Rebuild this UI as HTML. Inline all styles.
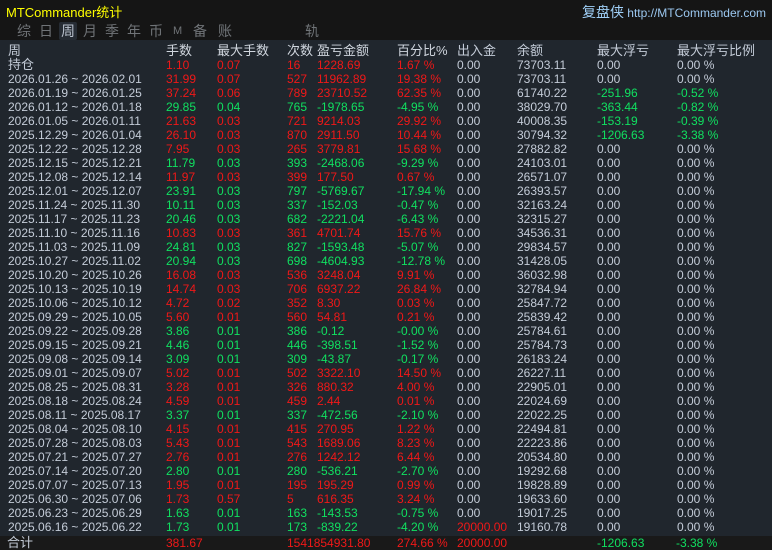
<!DOCTYPE html>
<html><head><meta charset="utf-8"><style>
*{margin:0;padding:0;box-sizing:border-box}
body{width:772px;height:550px;background:#151515;font-family:"Liberation Sans","Noto Sans CJK SC",sans-serif;font-size:12px;overflow:hidden;position:relative;color:#c4ccd8}
.title{position:absolute;left:6px;top:2px;color:#ffff00;font-size:13px}
.site{position:absolute;right:6px;top:2px;color:#9cc8f0;font-size:12px}
.site b{font-weight:normal;font-size:14px;color:#a0d0f8}
.tabs{position:absolute;top:22px;left:0;height:18px;}
.tabs span{position:absolute;top:0;color:#707478;font-size:14px;line-height:18px}
.tabs .on{background:#262c34;color:#b8c0cc;padding:0 2px;border-radius:2px}
.panel{position:absolute;left:0;top:40px;width:772px;height:496px;background:#20262d}
.row{position:absolute;left:0;height:14px;line-height:14px;white-space:nowrap;width:772px}
.row span{position:absolute;top:0}
.c0{left:8px}.c1{left:166px}.c2{left:217px}.c3{left:287px}.c4{left:317px}.c5{left:397px}.c6{left:457px}.c7{left:517px}.c8{left:597px}.c9{left:677px}
.hd{font-size:13px;color:#d0d6de}
.r span{color:#f01818}.g span{color:#10e060}
.row span.c0,.row span.c6,.row span.c7,.row span.c8,.row span.c9{color:#c4ccd8}
.row span.rr{color:#f01818}.row span.gg{color:#10e060}
.tot{position:absolute;left:0;top:536px;width:772px;height:14px;background:#191919}
.tot span{position:absolute;top:0;line-height:14px;color:#f01818}
</style></head><body>
<div class="title">MTCommander统计</div>
<div class="site"><b>复盘侠</b> http://MTCommander.com</div>
<div class="tabs">
<span style="left:17px">综</span><span style="left:39px">日</span><span class="on" style="left:59px">周</span><span style="left:83px">月</span><span style="left:105px">季</span><span style="left:127px">年</span><span style="left:149px">币</span><span style="left:173px;font-size:11px">M</span><span style="left:193px">备</span><span style="left:218px">账户</span><span style="left:305px">轨迹</span>
</div>
<div class="panel"></div>
<div class="row hd" style="top:44px"><span class="c0">周</span><span class="c1">手数</span><span class="c2">最大手数</span><span class="c3">次数</span><span class="c4">盈亏金额</span><span class="c5">百分比%</span><span class="c6">出入金</span><span class="c7">余额</span><span class="c8">最大浮亏</span><span class="c9">最大浮亏比例</span></div>
<div class="row r" style="top:58px"><span class="c0" style="font-size:13px">持仓</span><span class="c1">1.10</span><span class="c2">0.07</span><span class="c3">16</span><span class="c4">1228.69</span><span class="c5">1.67 %</span><span class="c6">0.00</span><span class="c7">73703.11</span><span class="c8">0.00</span><span class="c9">0.00 %</span></div>
<div class="row r" style="top:72px"><span class="c0">2026.01.26 ~ 2026.02.01</span><span class="c1">31.99</span><span class="c2">0.07</span><span class="c3">527</span><span class="c4">11962.89</span><span class="c5">19.38 %</span><span class="c6">0.00</span><span class="c7">73703.11</span><span class="c8">0.00</span><span class="c9">0.00 %</span></div>
<div class="row r" style="top:86px"><span class="c0">2026.01.19 ~ 2026.01.25</span><span class="c1">37.24</span><span class="c2">0.06</span><span class="c3">789</span><span class="c4">23710.52</span><span class="c5">62.35 %</span><span class="c6">0.00</span><span class="c7">61740.22</span><span class="c8 gg">-251.96</span><span class="c9 gg">-0.52 %</span></div>
<div class="row g" style="top:100px"><span class="c0">2026.01.12 ~ 2026.01.18</span><span class="c1">29.85</span><span class="c2">0.04</span><span class="c3">765</span><span class="c4">-1978.65</span><span class="c5">-4.95 %</span><span class="c6">0.00</span><span class="c7">38029.70</span><span class="c8 gg">-363.44</span><span class="c9 gg">-0.82 %</span></div>
<div class="row r" style="top:114px"><span class="c0">2026.01.05 ~ 2026.01.11</span><span class="c1">21.63</span><span class="c2">0.03</span><span class="c3">721</span><span class="c4">9214.03</span><span class="c5">29.92 %</span><span class="c6">0.00</span><span class="c7">40008.35</span><span class="c8 gg">-153.19</span><span class="c9 gg">-0.39 %</span></div>
<div class="row r" style="top:128px"><span class="c0">2025.12.29 ~ 2026.01.04</span><span class="c1">26.10</span><span class="c2">0.03</span><span class="c3">870</span><span class="c4">2911.50</span><span class="c5">10.44 %</span><span class="c6">0.00</span><span class="c7">30794.32</span><span class="c8 gg">-1206.63</span><span class="c9 gg">-3.38 %</span></div>
<div class="row r" style="top:142px"><span class="c0">2025.12.22 ~ 2025.12.28</span><span class="c1">7.95</span><span class="c2">0.03</span><span class="c3">265</span><span class="c4">3779.81</span><span class="c5">15.68 %</span><span class="c6">0.00</span><span class="c7">27882.82</span><span class="c8">0.00</span><span class="c9">0.00 %</span></div>
<div class="row g" style="top:156px"><span class="c0">2025.12.15 ~ 2025.12.21</span><span class="c1">11.79</span><span class="c2">0.03</span><span class="c3">393</span><span class="c4">-2468.06</span><span class="c5">-9.29 %</span><span class="c6">0.00</span><span class="c7">24103.01</span><span class="c8">0.00</span><span class="c9">0.00 %</span></div>
<div class="row r" style="top:170px"><span class="c0">2025.12.08 ~ 2025.12.14</span><span class="c1">11.97</span><span class="c2">0.03</span><span class="c3">399</span><span class="c4">177.50</span><span class="c5">0.67 %</span><span class="c6">0.00</span><span class="c7">26571.07</span><span class="c8">0.00</span><span class="c9">0.00 %</span></div>
<div class="row g" style="top:184px"><span class="c0">2025.12.01 ~ 2025.12.07</span><span class="c1">23.91</span><span class="c2">0.03</span><span class="c3">797</span><span class="c4">-5769.67</span><span class="c5">-17.94 %</span><span class="c6">0.00</span><span class="c7">26393.57</span><span class="c8">0.00</span><span class="c9">0.00 %</span></div>
<div class="row g" style="top:198px"><span class="c0">2025.11.24 ~ 2025.11.30</span><span class="c1">10.11</span><span class="c2">0.03</span><span class="c3">337</span><span class="c4">-152.03</span><span class="c5">-0.47 %</span><span class="c6">0.00</span><span class="c7">32163.24</span><span class="c8">0.00</span><span class="c9">0.00 %</span></div>
<div class="row g" style="top:212px"><span class="c0">2025.11.17 ~ 2025.11.23</span><span class="c1">20.46</span><span class="c2">0.03</span><span class="c3">682</span><span class="c4">-2221.04</span><span class="c5">-6.43 %</span><span class="c6">0.00</span><span class="c7">32315.27</span><span class="c8">0.00</span><span class="c9">0.00 %</span></div>
<div class="row r" style="top:226px"><span class="c0">2025.11.10 ~ 2025.11.16</span><span class="c1">10.83</span><span class="c2">0.03</span><span class="c3">361</span><span class="c4">4701.74</span><span class="c5">15.76 %</span><span class="c6">0.00</span><span class="c7">34536.31</span><span class="c8">0.00</span><span class="c9">0.00 %</span></div>
<div class="row g" style="top:240px"><span class="c0">2025.11.03 ~ 2025.11.09</span><span class="c1">24.81</span><span class="c2">0.03</span><span class="c3">827</span><span class="c4">-1593.48</span><span class="c5">-5.07 %</span><span class="c6">0.00</span><span class="c7">29834.57</span><span class="c8">0.00</span><span class="c9">0.00 %</span></div>
<div class="row g" style="top:254px"><span class="c0">2025.10.27 ~ 2025.11.02</span><span class="c1">20.94</span><span class="c2">0.03</span><span class="c3">698</span><span class="c4">-4604.93</span><span class="c5">-12.78 %</span><span class="c6">0.00</span><span class="c7">31428.05</span><span class="c8">0.00</span><span class="c9">0.00 %</span></div>
<div class="row r" style="top:268px"><span class="c0">2025.10.20 ~ 2025.10.26</span><span class="c1">16.08</span><span class="c2">0.03</span><span class="c3">536</span><span class="c4">3248.04</span><span class="c5">9.91 %</span><span class="c6">0.00</span><span class="c7">36032.98</span><span class="c8">0.00</span><span class="c9">0.00 %</span></div>
<div class="row r" style="top:282px"><span class="c0">2025.10.13 ~ 2025.10.19</span><span class="c1">14.74</span><span class="c2">0.03</span><span class="c3">706</span><span class="c4">6937.22</span><span class="c5">26.84 %</span><span class="c6">0.00</span><span class="c7">32784.94</span><span class="c8">0.00</span><span class="c9">0.00 %</span></div>
<div class="row r" style="top:296px"><span class="c0">2025.10.06 ~ 2025.10.12</span><span class="c1">4.72</span><span class="c2">0.02</span><span class="c3">352</span><span class="c4">8.30</span><span class="c5">0.03 %</span><span class="c6">0.00</span><span class="c7">25847.72</span><span class="c8">0.00</span><span class="c9">0.00 %</span></div>
<div class="row r" style="top:310px"><span class="c0">2025.09.29 ~ 2025.10.05</span><span class="c1">5.60</span><span class="c2">0.01</span><span class="c3">560</span><span class="c4">54.81</span><span class="c5">0.21 %</span><span class="c6">0.00</span><span class="c7">25839.42</span><span class="c8">0.00</span><span class="c9">0.00 %</span></div>
<div class="row g" style="top:324px"><span class="c0">2025.09.22 ~ 2025.09.28</span><span class="c1">3.86</span><span class="c2">0.01</span><span class="c3">386</span><span class="c4">-0.12</span><span class="c5">-0.00 %</span><span class="c6">0.00</span><span class="c7">25784.61</span><span class="c8">0.00</span><span class="c9">0.00 %</span></div>
<div class="row g" style="top:338px"><span class="c0">2025.09.15 ~ 2025.09.21</span><span class="c1">4.46</span><span class="c2">0.01</span><span class="c3">446</span><span class="c4">-398.51</span><span class="c5">-1.52 %</span><span class="c6">0.00</span><span class="c7">25784.73</span><span class="c8">0.00</span><span class="c9">0.00 %</span></div>
<div class="row g" style="top:352px"><span class="c0">2025.09.08 ~ 2025.09.14</span><span class="c1">3.09</span><span class="c2">0.01</span><span class="c3">309</span><span class="c4">-43.87</span><span class="c5">-0.17 %</span><span class="c6">0.00</span><span class="c7">26183.24</span><span class="c8">0.00</span><span class="c9">0.00 %</span></div>
<div class="row r" style="top:366px"><span class="c0">2025.09.01 ~ 2025.09.07</span><span class="c1">5.02</span><span class="c2">0.01</span><span class="c3">502</span><span class="c4">3322.10</span><span class="c5">14.50 %</span><span class="c6">0.00</span><span class="c7">26227.11</span><span class="c8">0.00</span><span class="c9">0.00 %</span></div>
<div class="row r" style="top:380px"><span class="c0">2025.08.25 ~ 2025.08.31</span><span class="c1">3.28</span><span class="c2">0.01</span><span class="c3">326</span><span class="c4">880.32</span><span class="c5">4.00 %</span><span class="c6">0.00</span><span class="c7">22905.01</span><span class="c8">0.00</span><span class="c9">0.00 %</span></div>
<div class="row r" style="top:394px"><span class="c0">2025.08.18 ~ 2025.08.24</span><span class="c1">4.59</span><span class="c2">0.01</span><span class="c3">459</span><span class="c4">2.44</span><span class="c5">0.01 %</span><span class="c6">0.00</span><span class="c7">22024.69</span><span class="c8">0.00</span><span class="c9">0.00 %</span></div>
<div class="row g" style="top:408px"><span class="c0">2025.08.11 ~ 2025.08.17</span><span class="c1">3.37</span><span class="c2">0.01</span><span class="c3">337</span><span class="c4">-472.56</span><span class="c5">-2.10 %</span><span class="c6">0.00</span><span class="c7">22022.25</span><span class="c8">0.00</span><span class="c9">0.00 %</span></div>
<div class="row r" style="top:422px"><span class="c0">2025.08.04 ~ 2025.08.10</span><span class="c1">4.15</span><span class="c2">0.01</span><span class="c3">415</span><span class="c4">270.95</span><span class="c5">1.22 %</span><span class="c6">0.00</span><span class="c7">22494.81</span><span class="c8">0.00</span><span class="c9">0.00 %</span></div>
<div class="row r" style="top:436px"><span class="c0">2025.07.28 ~ 2025.08.03</span><span class="c1">5.43</span><span class="c2">0.01</span><span class="c3">543</span><span class="c4">1689.06</span><span class="c5">8.23 %</span><span class="c6">0.00</span><span class="c7">22223.86</span><span class="c8">0.00</span><span class="c9">0.00 %</span></div>
<div class="row r" style="top:450px"><span class="c0">2025.07.21 ~ 2025.07.27</span><span class="c1">2.76</span><span class="c2">0.01</span><span class="c3">276</span><span class="c4">1242.12</span><span class="c5">6.44 %</span><span class="c6">0.00</span><span class="c7">20534.80</span><span class="c8">0.00</span><span class="c9">0.00 %</span></div>
<div class="row g" style="top:464px"><span class="c0">2025.07.14 ~ 2025.07.20</span><span class="c1">2.80</span><span class="c2">0.01</span><span class="c3">280</span><span class="c4">-536.21</span><span class="c5">-2.70 %</span><span class="c6">0.00</span><span class="c7">19292.68</span><span class="c8">0.00</span><span class="c9">0.00 %</span></div>
<div class="row r" style="top:478px"><span class="c0">2025.07.07 ~ 2025.07.13</span><span class="c1">1.95</span><span class="c2">0.01</span><span class="c3">195</span><span class="c4">195.29</span><span class="c5">0.99 %</span><span class="c6">0.00</span><span class="c7">19828.89</span><span class="c8">0.00</span><span class="c9">0.00 %</span></div>
<div class="row r" style="top:492px"><span class="c0">2025.06.30 ~ 2025.07.06</span><span class="c1">1.73</span><span class="c2">0.57</span><span class="c3">5</span><span class="c4">616.35</span><span class="c5">3.24 %</span><span class="c6">0.00</span><span class="c7">19633.60</span><span class="c8">0.00</span><span class="c9">0.00 %</span></div>
<div class="row g" style="top:506px"><span class="c0">2025.06.23 ~ 2025.06.29</span><span class="c1">1.63</span><span class="c2">0.01</span><span class="c3">163</span><span class="c4">-143.53</span><span class="c5">-0.75 %</span><span class="c6">0.00</span><span class="c7">19017.25</span><span class="c8">0.00</span><span class="c9">0.00 %</span></div>
<div class="row g" style="top:520px"><span class="c0">2025.06.16 ~ 2025.06.22</span><span class="c1">1.73</span><span class="c2">0.01</span><span class="c3">173</span><span class="c4">-839.22</span><span class="c5">-4.20 %</span><span class="c6 rr">20000.00</span><span class="c7">19160.78</span><span class="c8">0.00</span><span class="c9">0.00 %</span></div>
<div class="tot"><span style="left:7px;color:#c4ccd8;font-size:13px">合计</span><span style="left:166px">381.67</span><span style="left:287px">1541854931.80</span><span style="left:397px">274.66 %</span><span style="left:457px">20000.00</span><span style="left:597px;color:#10e060">-1206.63</span><span style="left:676px;color:#10e060">-3.38 %</span></div>
</body></html>
